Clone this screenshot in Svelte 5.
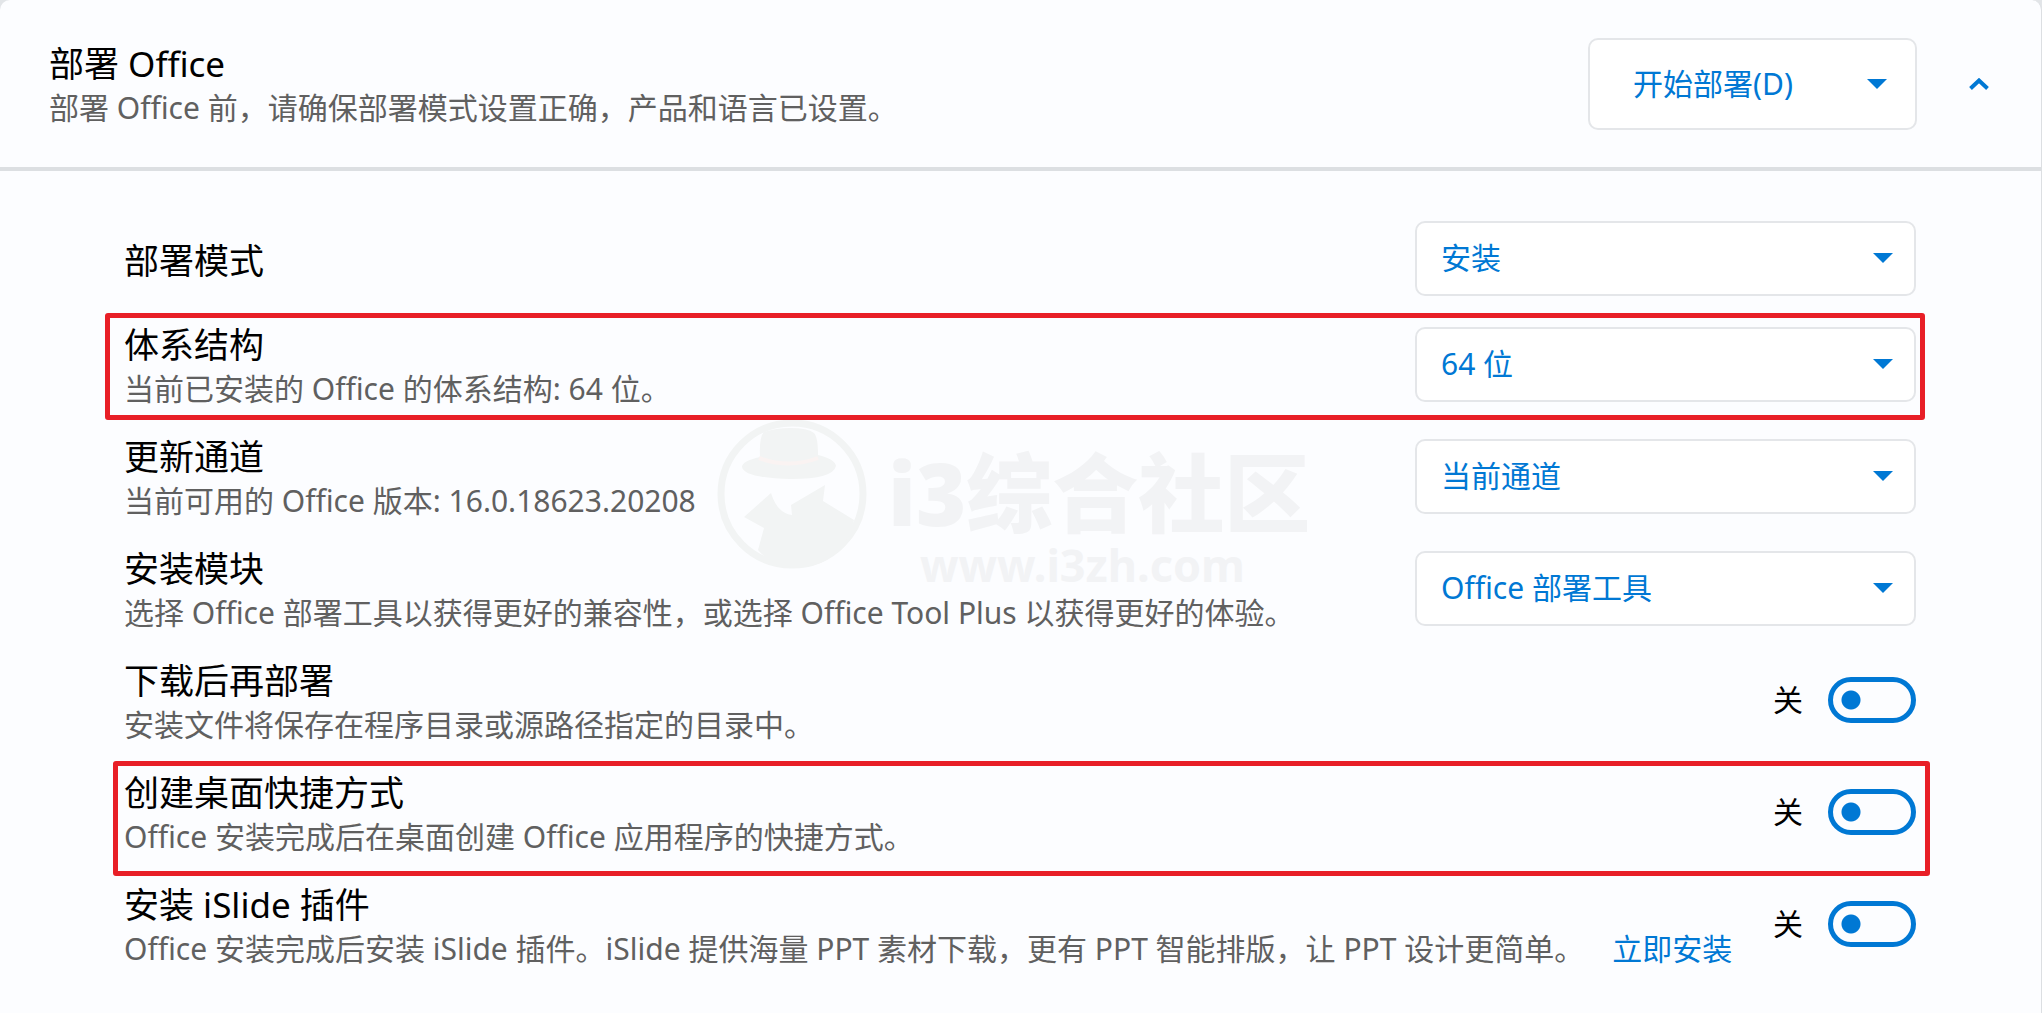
<script>
	let open = $state(true);

	// type: 'select' shows a drop-down, 'toggle' shows a switch
	let settings = $state([
		{ id: 'mode', title: '部署模式', type: 'select', value: '安装' },
		{ id: 'arch', title: '体系结构', desc: '当前已安装的 Office 的体系结构: 64 位。', type: 'select', value: '64 位', mark: 'mark-arch' },
		{ id: 'channel', title: '更新通道', desc: '当前可用的 Office 版本: 16.0.18623.20208', type: 'select', value: '当前通道' },
		{ id: 'module', title: '安装模块', desc: '选择 Office 部署工具以获得更好的兼容性，或选择 Office Tool Plus 以获得更好的体验。', type: 'select', value: 'Office 部署工具' },
		{ id: 'download', title: '下载后再部署', desc: '安装文件将保存在程序目录或源路径指定的目录中。', type: 'toggle', on: false },
		{ id: 'shortcut', title: '创建桌面快捷方式', desc: 'Office 安装完成后在桌面创建 Office 应用程序的快捷方式。', type: 'toggle', on: false, mark: 'mark-shortcut' },
		{ id: 'islide', title: '安装 iSlide 插件', desc: 'Office 安装完成后安装 iSlide 插件。iSlide 提供海量 PPT 素材下载，更有 PPT 智能排版，让 PPT 设计更简单。', link: '立即安装', type: 'toggle', on: false }
	]);
</script>

{#snippet arrow()}
	<svg class="arrow" width="20" height="10" viewBox="0 0 20 10" aria-hidden="true">
		<path d="M0 0h20L10 10z" />
	</svg>
{/snippet}

<main class="panel">
	<div class="watermark" aria-hidden="true">
		<svg width="152" height="152" viewBox="0 0 152 152">
			<circle cx="76" cy="77" r="71" fill="none" stroke="#f2f4f4" stroke-width="7" />
			<path fill="#f2f4f4" d="M44 40Q43 20 48 15Q60 11 74 11Q92 11 98 16Q102 20 102 38Q119 42 120 49Q117 62 75 62Q28 61 26 50Q26 44 44 40Z" />
			<path fill="none" stroke="#faf3f2" stroke-width="4" d="M43 41Q73 52 102 41" />
			<path fill="#f2f4f4" d="M28 100L55 76Q61 96 76 98L75 88L109 68L107 84L138 103Q126 151 76 151Q56 149 42 133L48 111Z" />
		</svg>
		<div class="brand">
			<strong>i3综合社区</strong>
			<span>www.i3zh.com</span>
		</div>
	</div>

	<header>
		<div class="text">
			<h1>部署 Office</h1>
			<p>部署 Office 前，请确保部署模式设置正确，产品和语言已设置。</p>
		</div>
		<button class="deploy">
			<span>开始部署(D)</span>
			{@render arrow()}
		</button>
		<button class="collapse" aria-label="折叠" onclick={() => (open = !open)}>
			<svg width="20" height="12" viewBox="0 0 20 12" aria-hidden="true">
				<path d="M1.5 10.5L10 2.5l8.5 8" />
			</svg>
		</button>
	</header>

	{#if open}
		<div class="settings">
			{#each settings as item (item.id)}
				<div class="row {item.mark ?? ''}">
					<div class="text">
						<label class="title" for={item.id}>{item.title}</label>
						{#if item.desc}
							<p>{item.desc}{#if item.link}<a href="#islide">{item.link}</a>{/if}</p>
						{/if}
					</div>
					{#if item.type === 'select'}
						<div class="select">
							<select id={item.id} bind:value={item.value}>
								<option>{item.value}</option>
							</select>
							{@render arrow()}
						</div>
					{:else}
						<div class="toggle">
							<span>{item.on ? '开' : '关'}</span>
							<input type="checkbox" role="switch" id={item.id} bind:checked={item.on} />
						</div>
					{/if}
				</div>
			{/each}
		</div>
	{/if}
</main>

<style>
	:global(body) {
		margin: 0;
		background: #e2e5e8;
	}

	.panel {
		position: relative;
		box-sizing: border-box;
		min-height: 100vh;
		border-right: 1px solid #dcdfe2;
		border-radius: 10px 10px 0 0;
		background: #fcfdff;
		color: #000;
		font-family: 'Noto Sans', 'Noto Sans CJK SC', sans-serif;
		font-size: 30px;
		line-height: 44px;
	}

	header {
		display: flex;
		align-items: center;
		height: 167px;
		padding: 0 50px 0 49px;
		border-bottom: 4px solid #dcdfe2;
	}

	.text {
		flex: 1;
		padding-top: 5px;
	}

	h1,
	.title {
		display: block;
		margin: 0;
		font-size: 35px;
		font-weight: 400;
	}

	p {
		margin: 0;
		color: #606060;
		white-space: nowrap;
	}

	a {
		margin-left: 28px;
		color: #0078d4;
		text-decoration: none;
	}

	button,
	select {
		font: inherit;
		color: #0078d4;
	}

	.arrow {
		fill: #0078d4;
	}

	.deploy {
		display: flex;
		align-items: center;
		justify-content: space-between;
		box-sizing: border-box;
		width: 329px;
		height: 92px;
		padding: 0 28px 0 43px;
		border: 2px solid #e4e6e9;
		border-radius: 10px;
		background: #fff;
	}

	.collapse {
		display: flex;
		margin-left: 50px;
		padding: 0 2px;
		border: 0;
		background: none;
	}

	.collapse path {
		fill: none;
		stroke: #0078d4;
		stroke-width: 4;
	}

	.settings {
		padding: 37px 125px 0 124px;
	}

	.row {
		position: relative;
		display: flex;
		align-items: center;
		height: 112px;
	}

	.row:first-child {
		height: 100px;
	}

	.select {
		position: relative;
		width: 501px;
	}

	.select .arrow {
		position: absolute;
		top: 32px;
		right: 23px;
		pointer-events: none;
	}

	select {
		appearance: none;
		width: 100%;
		height: 75px;
		padding: 0 24px;
		border: 2px solid #e4e6e9;
		border-radius: 10px;
		background: #fff;
	}

	.toggle {
		display: flex;
		align-items: center;
		gap: 25px;
	}

	.toggle input {
		appearance: none;
		width: 88px;
		height: 46px;
		margin: 0;
		border: 5px solid #0078d4;
		border-radius: 23px;
		background: radial-gradient(circle at 18px 18px, #0078d4 9px, transparent 10px);
	}

	.toggle input:checked {
		background: radial-gradient(circle at 60px 18px, #0078d4 9px, transparent 10px);
	}

	/* red frames round the options that need attention */
	.mark-arch::after,
	.mark-shortcut::after {
		content: '';
		position: absolute;
		border: 5px solid #e81f27;
		border-radius: 3px;
		pointer-events: none;
	}

	.mark-arch::after {
		inset: 5px -9px 0 -19px;
	}

	.mark-shortcut::after {
		inset: 5px -14px -8px -11px;
	}

	.watermark {
		position: absolute;
		top: 417px;
		left: 716px;
		display: flex;
		gap: 20px;
		color: #f2f3f5;
		font-weight: 700;
		pointer-events: none;
	}

	.brand {
		display: flex;
		flex-direction: column;
		padding-top: 30px;
	}

	.brand strong {
		font-size: 86px;
		font-weight: 900;
		line-height: 92px;
	}

	.brand span {
		padding-left: 32px;
		font-size: 45px;
		line-height: 52px;
	}
</style>
